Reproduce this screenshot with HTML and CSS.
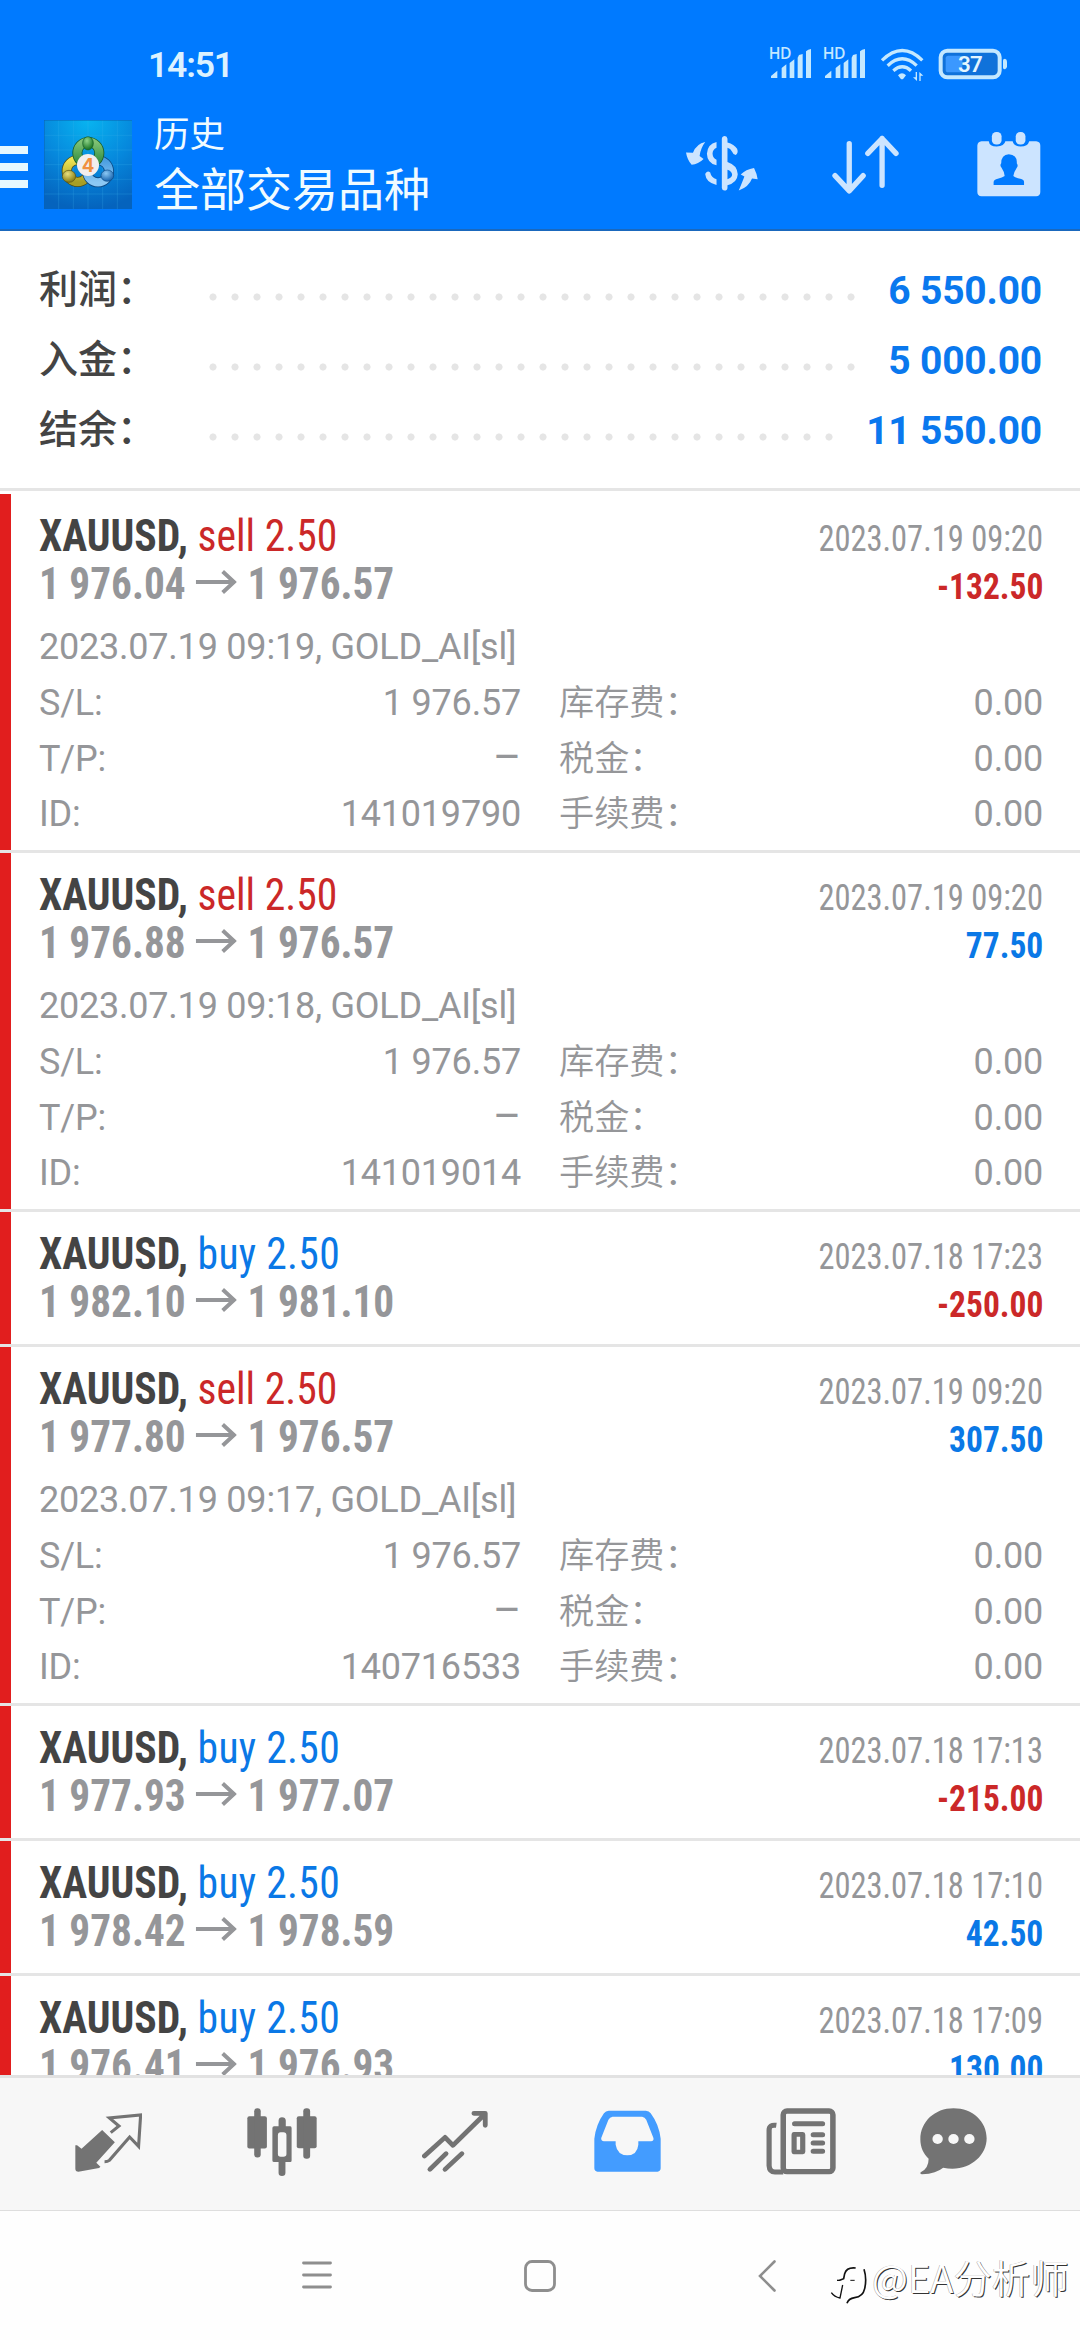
FILE: index.html
```html
<!DOCTYPE html>
<html lang="zh-CN">
<head>
<meta charset="utf-8">
<title>历史</title>
<link rel="stylesheet" href="styles.css">
</head>
<body>
<svg class="defs" width="0" height="0">
  <symbol id="arrow" viewBox="0 0 42 24" preserveAspectRatio="none"><path d="M0 12H40M27.5 1.5L39 12L27.5 22.5" fill="none" stroke="currentColor" stroke-width="4"/></symbol>
</svg>
<div class="screen">
  <header class="header">
    <div class="status">
      <span class="time">14:51</span>
      <svg class="status-icons" viewBox="27 39 714 102" fill="#c4e8ff">
        <g id="sim">
          <text x="23" y="72" class="hd">HD</text>
          <path d="M30 129V123L49 107V129ZM62 129V99L76 88V129ZM86 129V84L100 73V129ZM110 129V68L114 60L125 57V129ZM135 129V49Q141 43 150 42V129Z"/>
        </g>
        <use href="#sim" x="162"/>
        <g fill="none" stroke="#c4e8ff" stroke-width="10">
          <path d="M363 76Q424 17 484 76"/>
          <path d="M380 92Q424 51 467 92"/>
          <path d="M397 107Q424 84 450 107"/>
        </g>
        <path d="M411 121Q423 108 435 121L427 131Q423 134 419 131ZM464 111H468V138L456 127H464ZM475 138V111L487 122H479V138Z"/>
        <rect x="539" y="47" width="177" height="80" rx="20" fill="#1072da" stroke="#c4e8ff" stroke-width="12"/>
        <rect x="554" y="62" width="50" height="50" rx="8" fill="#3b98ff"/>
        <path d="M726 76Q726 71 732 71Q738 72 738 80V94Q738 102 732 103Q726 103 726 98Z"/>
        <text x="591" y="112" class="level">37</text>
      </svg>
    </div>
    <div class="toolbar">
      <div class="burger"><i></i><i></i><i></i></div>
      <svg class="app" viewBox="43 30 264 267">
        <defs>
          <radialGradient id="bg" cx=".5" cy="0" r="1"><stop offset="0" stop-color="#08b4f0"/><stop offset=".55" stop-color="#0687dc"/><stop offset="1" stop-color="#0563bd"/></radialGradient>
          <linearGradient id="gr" x2="0" y2="1"><stop stop-color="#7fc274"/><stop offset="1" stop-color="#2d8a3e"/></linearGradient>
          <linearGradient id="ye" x2="0" y2="1"><stop stop-color="#ede352"/><stop offset="1" stop-color="#a89e24"/></linearGradient>
          <linearGradient id="bl" x2="0" y2="1"><stop stop-color="#4a9ee0"/><stop offset="1" stop-color="#8cc8f4"/></linearGradient>
          <radialGradient id="gb" cx=".4" cy=".3" r=".7"><stop stop-color="#8fd48a"/><stop offset="1" stop-color="#14701f"/></radialGradient>
          <radialGradient id="yb" cx=".4" cy=".3" r=".7"><stop stop-color="#e9e080"/><stop offset="1" stop-color="#857a10"/></radialGradient>
          <radialGradient id="bb" cx=".4" cy=".3" r=".7"><stop stop-color="#8cc8f4"/><stop offset="1" stop-color="#1763ad"/></radialGradient>
        </defs>
        <rect x="43" y="30" width="264" height="267" fill="url(#bg)"/>
        <path d="M87 30V297M131 30V297M175 30V297M219 30V297M263 30V297M43 76H307M43 120H307M43 164H307M43 208H307M43 252H307" stroke="#3fb4ee" stroke-opacity=".35" stroke-width="2"/>
        <path d="M43 297V30H307" fill="none" stroke="#0b62b4" stroke-width="3"/>
        <g fill="none" stroke-width="25">
          <circle cx="144" cy="183" r="33" stroke="#4d4d18" stroke-width="30"/><circle cx="144" cy="183" r="33" stroke="url(#ye)"/>
          <circle cx="205" cy="184" r="33" stroke="#0d4a85" stroke-width="30"/><circle cx="205" cy="184" r="33" stroke="url(#bl)"/>
          <circle cx="176" cy="129" r="33" stroke="#175c2a" stroke-width="30"/><circle cx="176" cy="129" r="33" stroke="url(#gr)"/>
        </g>
        <ellipse cx="175" cy="100" rx="16" ry="20" fill="url(#gb)" stroke="#175c2a" stroke-width="2"/>
        <ellipse cx="118" cy="199" rx="20" ry="18" fill="url(#yb)" stroke="#55501a" stroke-width="2"/>
        <ellipse cx="233" cy="197" rx="19" ry="17" fill="url(#bb)" stroke="#0d4a85" stroke-width="2"/>
        <circle cx="175" cy="165" r="33" fill="#f2eeee"/>
        <text x="175" y="185" class="four">4</text>
      </svg>
      <div class="titles">
        <div class="title-small">历史</div>
        <div class="title-big">全部交易品种</div>
      </div>
      <svg class="ic-money" viewBox="18 30 217 168" fill="#cce4ff">
        <path d="M76 51Q50 56 39 83L18 82Q22 105 35 119Q55 118 71 102L59 93Q62 69 76 51Z"/>
        <path d="M177 197Q186 176 194 155L183 149Q198 133 223 129Q232 147 234 163L217 161Q207 187 177 197Z"/>
        <path d="M126 41Q127 33 135 33Q142 33 143 41V52Q163 57 172 71Q177 83 168 90Q160 89 157 80Q152 70 143 68V111Q172 120 174 148Q173 173 143 181V189Q142 197 134 197Q127 197 126 189ZM143 134V163Q157 159 157 149Q156 138 143 134ZM110 51V68Q98 74 98 86Q99 100 110 104V121Q82 115 81 86Q83 57 110 51ZM77 145Q83 136 91 143Q94 159 110 163V180Q78 173 76 148Z" fill-rule="evenodd"/>
      </svg>
      <svg class="ic-sort" viewBox="454 30 202 177" fill="none" stroke="#cce4ff" stroke-width="16" stroke-linecap="round" stroke-linejoin="round">
        <path d="M506 56V198M463 152L506 198L548 152M605 181V40M562 85L605 40L647 85"/>
      </svg>
      <svg class="ic-cal" viewBox="1267 395 185 196" preserveAspectRatio="none">
        <path d="M1280 423H1301Q1303 439 1324 439Q1346 438 1349 423H1370Q1373 438 1393 439Q1414 439 1418 423H1438Q1450 424 1450 436V576Q1450 588 1438 589H1280Q1268 588 1268 576V436Q1269 424 1280 423Z" fill="#cce4ff"/>
        <rect x="1310" y="395" width="28" height="38" rx="13" fill="#cce4ff"/><rect x="1379" y="395" width="28" height="38" rx="13" fill="#cce4ff"/>
        <path d="M1359 462Q1384 464 1382 489Q1387 496 1382 503Q1374 515 1372 528Q1378 533 1392 536Q1403 538 1403 546V555H1315V546Q1316 538 1327 536Q1340 533 1347 528Q1346 515 1338 503Q1332 496 1337 489Q1337 464 1359 462Z" fill="#007aff"/>
      </svg>
    </div>
  </header>

  <section class="summary">
    <div class="sum-row"><span class="sum-label">利润：</span><span class="dots"></span><b>6 550.00</b></div>
    <div class="sum-row"><span class="sum-label">入金：</span><span class="dots"></span><b>5 000.00</b></div>
    <div class="sum-row"><span class="sum-label">结余：</span><span class="dots short"></span><b>11 550.00</b></div>
  </section>

  <main class="list">
    <article class="deal">
      <div class="line"><span class="name"><b>XAUUSD,</b> <span class="sell">sell 2.50</span></span><span class="date">2023.07.19 09:20</span></div>
      <div class="line"><span class="price">1 976.04<svg class="arrow"><use href="#arrow"/></svg>1 976.57</span><span class="profit loss">-132.50</span></div>
      <div class="comment">2023.07.19 09:19, GOLD_AI[sl]</div>
      <div class="grid"><span>S/L:</span><span class="r">1 976.57</span><span class="c">库存费：</span><span class="r">0.00</span><span>T/P:</span><span class="r dash">–</span><span class="c">税金：</span><span class="r">0.00</span><span>ID:</span><span class="r">141019790</span><span class="c">手续费：</span><span class="r">0.00</span></div>
    </article>
    <article class="deal">
      <div class="line"><span class="name"><b>XAUUSD,</b> <span class="sell">sell 2.50</span></span><span class="date">2023.07.19 09:20</span></div>
      <div class="line"><span class="price">1 976.88<svg class="arrow"><use href="#arrow"/></svg>1 976.57</span><span class="profit gain">77.50</span></div>
      <div class="comment">2023.07.19 09:18, GOLD_AI[sl]</div>
      <div class="grid"><span>S/L:</span><span class="r">1 976.57</span><span class="c">库存费：</span><span class="r">0.00</span><span>T/P:</span><span class="r dash">–</span><span class="c">税金：</span><span class="r">0.00</span><span>ID:</span><span class="r">141019014</span><span class="c">手续费：</span><span class="r">0.00</span></div>
    </article>
    <article class="deal">
      <div class="line"><span class="name"><b>XAUUSD,</b> <span class="buy">buy 2.50</span></span><span class="date">2023.07.18 17:23</span></div>
      <div class="line"><span class="price">1 982.10<svg class="arrow"><use href="#arrow"/></svg>1 981.10</span><span class="profit loss">-250.00</span></div>
    </article>
    <article class="deal">
      <div class="line"><span class="name"><b>XAUUSD,</b> <span class="sell">sell 2.50</span></span><span class="date">2023.07.19 09:20</span></div>
      <div class="line"><span class="price">1 977.80<svg class="arrow"><use href="#arrow"/></svg>1 976.57</span><span class="profit gain">307.50</span></div>
      <div class="comment">2023.07.19 09:17, GOLD_AI[sl]</div>
      <div class="grid"><span>S/L:</span><span class="r">1 976.57</span><span class="c">库存费：</span><span class="r">0.00</span><span>T/P:</span><span class="r dash">–</span><span class="c">税金：</span><span class="r">0.00</span><span>ID:</span><span class="r">140716533</span><span class="c">手续费：</span><span class="r">0.00</span></div>
    </article>
    <article class="deal">
      <div class="line"><span class="name"><b>XAUUSD,</b> <span class="buy">buy 2.50</span></span><span class="date">2023.07.18 17:13</span></div>
      <div class="line"><span class="price">1 977.93<svg class="arrow"><use href="#arrow"/></svg>1 977.07</span><span class="profit loss">-215.00</span></div>
    </article>
    <article class="deal">
      <div class="line"><span class="name"><b>XAUUSD,</b> <span class="buy">buy 2.50</span></span><span class="date">2023.07.18 17:10</span></div>
      <div class="line"><span class="price">1 978.42<svg class="arrow"><use href="#arrow"/></svg>1 978.59</span><span class="profit gain">42.50</span></div>
    </article>
    <article class="deal">
      <div class="line"><span class="name"><b>XAUUSD,</b> <span class="buy">buy 2.50</span></span><span class="date">2023.07.18 17:09</span></div>
      <div class="line"><span class="price">1 976.41<svg class="arrow"><use href="#arrow"/></svg>1 976.93</span><span class="profit gain">130.00</span></div>
    </article>
  </main>

  <nav class="tabs">
    <svg style="width:67px" viewBox="218 203 195 204" preserveAspectRatio="none"><path d="M297 269L334 306L280 367L292 379L288 383L228 394Q219 394 219 385V315H224L237 325Z" fill="#737373"/><path d="M322 277L346 257L318 233L409 224L403 318L377 290L318 360Q313 364 304 364" fill="none" stroke="#737373" stroke-width="9"/></svg>
    <svg style="width:70px" viewBox="714 203 204 205" preserveAspectRatio="none" fill="#737373"><rect x="715" y="228" width="57" height="97" rx="6"/><rect x="735" y="204" width="19" height="148" rx="9"/><rect x="859" y="228" width="58" height="96" rx="6"/><rect x="878" y="204" width="20" height="152" rx="9"/><path fill-rule="evenodd" d="M806 258V241Q807 231 816 231Q826 231 827 241V258H840Q844 258 844 263V361Q844 366 840 366H826V398Q826 408 816 408Q806 408 806 398V366H793Q788 366 788 361V263Q788 258 793 258ZM804 285V342Q804 350 812 350H820Q829 350 829 342V285Q829 276 820 276H812Q804 276 804 285Z"/></svg>
    <svg style="width:66px" viewBox="1222 203 192 204" preserveAspectRatio="none" fill="none" stroke="#737373" stroke-width="14" stroke-linecap="round"><path stroke-linejoin="round" d="M1229 347L1289 291L1312 315L1405 221M1373 219H1406V255"/><path d="M1245 387L1292 340M1289 387L1338 340"/></svg>
    <svg style="width:67px" viewBox="157 203 195 204" preserveAspectRatio="none"><path fill-rule="evenodd" fill="#439cff" d="M200 211H308Q317 212 322 219Q346 252 351 295V384Q351 393 342 394H167Q158 393 158 384V295Q163 252 186 219Q191 212 200 211ZM211 229Q203 230 199 238L178 293Q177 302 186 303H220V313Q225 344 254 345Q283 344 286 313V303H323Q332 302 330 293L309 238Q305 230 297 229Z"/></svg>
    <svg style="width:70px" viewBox="656 203 203 204" preserveAspectRatio="none"><rect x="706" y="212" width="144" height="182" rx="11" fill="none" stroke="#737373" stroke-width="16"/><path d="M686 255Q665 252 665 270V376Q666 395 682 395H706" fill="none" stroke="#737373" stroke-width="15"/><g fill="none" stroke="#737373" stroke-width="15" stroke-linecap="round"><path d="M739 250H820M793 283H820M793 308H820M793 333H820"/></g><path fill="#737373" fill-rule="evenodd" d="M736 275H763Q770 276 770 283V334Q770 341 763 342H736Q730 341 730 334V283Q730 276 736 275ZM745 289V328H755V289Z"/></svg>
    <svg style="width:67px" viewBox="1102 203 194 204" preserveAspectRatio="none"><path fill="#737373" d="M1199 204C1255 204 1295 244 1295 294C1295 351 1238 398 1169 382Q1150 399 1108 402Q1101 402 1104 396Q1127 384 1127 355C1112 341 1103 321 1103 297C1103 244 1145 204 1199 204Z"/><g fill="#f7f7f7"><circle cx="1153" cy="296" r="15"/><circle cx="1199" cy="296" r="15"/><circle cx="1245" cy="296" r="15"/></g></svg>
  </nav>
  <footer class="sysnav">
    <svg width="30" height="30"><path d="M1.5 2H28.5M1.5 14H28.5M1.5 26H28.5" stroke="#8e8e8e" stroke-width="2.8" stroke-linecap="round"/></svg>
    <svg width="32" height="32"><rect x="1.500" y="1.500" width="29" height="29" rx="6.500" fill="none" stroke="#8e8e8e" stroke-width="2.800"/></svg>
    <svg width="18" height="32"><path d="M16.500 1.500L2 16L16.500 30.500" fill="none" stroke="#8e8e8e" stroke-width="2.600" stroke-linecap="round"/></svg>
    <div class="mark">
      <svg width="38" height="42" viewBox="30 74 114 126" fill="none" stroke="#111">
        <path d="M107 83Q80 80 74 100L71 115L59 120" stroke-width="5"/><path d="M60 120H51" stroke-width="4"/>
        <path d="M68 134L60 173Q43 170 34 157" stroke-width="4"/><path d="M91 120H104" stroke-width="3"/>
        <path d="M132 87Q141 115 134 145Q129 169 104 172Q85 175 81 189" stroke-width="5"/>
      </svg>
      <span>@EA分析师</span>
    </div>
  </footer>
</div>
</body>
</html>
```
FILE: styles.css
```css
* { box-sizing: border-box; }
body { margin: 0; background: #fff; font-family: Roboto, "Noto Sans CJK SC", sans-serif; }
.defs { position: absolute; }
.screen { width: 1080px; height: 2340px; display: flex; flex-direction: column; overflow: hidden; }

.header { height: 231px; background: #007aff; border-bottom: 2px solid #1a68bd; flex: none; }
.status { height: 104px; padding: 26px 72px 0 148px; display: flex; align-items: center; justify-content: space-between; }
.time { font-size: 35.500px; font-weight: 600; color: #dcf2ff; letter-spacing: -1.200px; }
.status-icons { width: 238px; height: 34px; overflow: visible; }
.hd { font: 600 47px "Open Sans", sans-serif; letter-spacing: -1px; }
.level { font: 600 67px Roboto, sans-serif; letter-spacing: -2px; fill: #e4f6ff; }
.toolbar { height: 125px; display: flex; align-items: flex-start; }
.burger { width: 28px; margin-top: 42px; display: grid; gap: 9px; }
.burger i { height: 8px; background: #e6f8ff; }
.app { width: 88px; height: 89px; margin: 16px 0 0 16px; flex: none; }
.four { font: 700 56px Inter, sans-serif; fill: #f09040; text-anchor: middle; }
.titles { margin: 8px 0 0 22px; width: 300px; color: #f0fbff; font-family: "Noto Sans CJK SC", sans-serif; font-weight: 400; white-space: nowrap; }
.title-small { font-size: 35.500px; line-height: 40px; }
.title-big { font-size: 46px; line-height: 60px; margin-top: 4px; }
.ic-money { width: 72px; height: 56px; margin: 31px 0 0 232px; flex: none; }
.ic-sort { width: 67px; height: 59px; margin: 31px 0 0 74px; flex: none; }
.ic-cal { width: 64px; height: 65px; margin: 28px 0 0 78px; flex: none; }

.summary { height: 260px; padding: 23px 38px 0 39px; border-bottom: 3px solid #e5e5e5; flex: none; margin-bottom: 3px; }
.sum-row { height: 70px; display: flex; align-items: center; color: #444; }
.sum-label { width: 163px; font-size: 39px; font-weight: 500; line-height: 60px; margin-top: 2px; white-space: nowrap; }
.dots { width: 660px; height: 8px; margin-top: 16px; background: radial-gradient(circle, #e5e5e5 3.200px, transparent 3.900px) 0 0 / 22px 8px; }
.dots.short { width: 638px; }
.sum-row b { margin: 3px 0 0 auto; font-size: 39px; font-weight: 700; letter-spacing: -.2px; color: #0a78ee; }

.list { flex: 1; min-height: 0; overflow: hidden; }
.deal { border-left: 11px solid #e11e1e; padding: 18px 37px 21px 28px; position: relative; }
.deal::after { content: ""; position: absolute; left: -11px; right: 0; bottom: 0; height: 3px; background: #e5e5e5; }
.line { height: 48px; line-height: 48px; display: flex; justify-content: space-between; align-items: baseline; white-space: nowrap; }
.name, .price, .date, .profit { font-family: "Roboto Condensed", Roboto, sans-serif; font-stretch: 75%; transform-origin: left; }
.name { font-size: 44px; color: #444; transform: scaleX(.946); }
.price { font-size: 44px; font-weight: 700; color: #959699; transform: scaleX(.938); }
.date, .profit { font-size: 36px; color: #959699; transform-origin: right; transform: scaleX(.902); }
.profit { font-weight: 700; transform: scaleX(.93); }
.sell, .profit.loss { color: #cb2828; }
.buy, .profit.gain { color: #0a78e6; }
.buy { letter-spacing: .3px; }
.arrow { width: 44px; height: 24px; margin: 0 11px 0 11px; vertical-align: 5px; }
.comment { margin-top: 11px; font-size: 36px; line-height: 56px; letter-spacing: -.22px; color: #959699; }
.grid { display: grid; grid-template-columns: 90px 392px 276px 1fr; grid-template-rows: 56px 55px 55.500px; margin-bottom: -9.500px; font-size: 36px; line-height: 56px; letter-spacing: -.2px; color: #959699; white-space: nowrap; }
.r { text-align: right; }
.dash { font-size: 43px; line-height: 52px; }
.c { padding-left: 38px; font-size: 35.200px; font-weight: 350; letter-spacing: 0; }

.tabs { height: 136px; flex: none; background: #f7f7f7; border-top: 3px solid #e2e2e2; border-bottom: 1px solid #dedede; padding: 30px 0 0 22px; display: grid; grid-template-columns: repeat(5, 173px) 132px; justify-items: center; align-items: start; }
.tabs svg { height: 68px; }
.sysnav { height: 129px; flex: none; display: flex; align-items: center; padding-left: 302px; position: relative; background: #fefefe; }
.sysnav > svg:nth-child(2) { margin-left: 192px; }
.sysnav > svg:nth-child(3) { margin-left: 202px; }
.mark { position: absolute; left: 830px; top: 41px; display: flex; align-items: flex-start; gap: 4px; }
.mark svg { margin-top: 13px; }
.mark span { font-family: "Noto Sans CJK SC", sans-serif; font-size: 38.400px; font-weight: 350; line-height: 48px; color: #fff; text-shadow: 1px 1px 0 #333, -.5px -.5px 0 #aaa; white-space: nowrap; }
```
